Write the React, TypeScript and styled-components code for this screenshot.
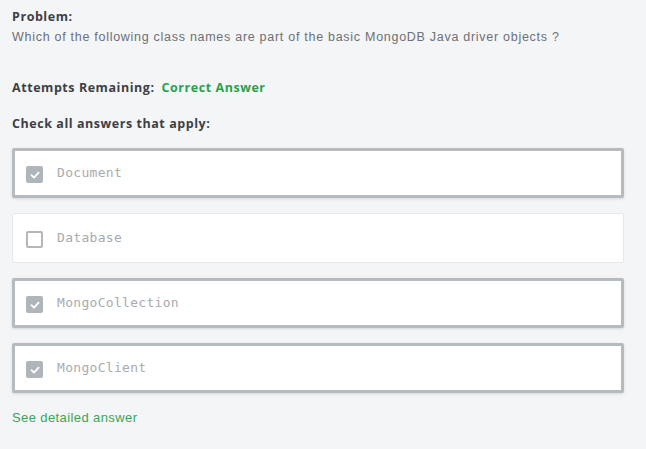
import styled, { createGlobalStyle } from "styled-components";

const GlobalStyle = createGlobalStyle`
  html, body {
    margin: 0;
    padding: 0;
    background: #f4f5f7;
  }
  body {
    font-family: "Liberation Sans", Arial, sans-serif;
  }
`;

type Answer = { id: string; label: string; checked: boolean };

const answers: Answer[] = [
  { id: "a1", label: "Document", checked: true },
  { id: "a2", label: "Database", checked: false },
  { id: "a3", label: "MongoCollection", checked: true },
  { id: "a4", label: "MongoClient", checked: true },
];

function CheckBox({ checked }: { checked: boolean }) {
  return (
    <Box $checked={checked}>
      {checked && (
        <svg width="12" height="12" viewBox="0 0 12 12">
          <path
            d="M2.5 6.2 L5 8.6 L9.6 3.6"
            fill="none"
            stroke="#fff"
            strokeWidth="1.8"
            strokeLinecap="round"
            strokeLinejoin="round"
          />
        </svg>
      )}
    </Box>
  );
}

export default function App() {
  return (
    <>
      <GlobalStyle />
      <Page>
        <Title>Problem:</Title>
        <Question>
          Which of the following class names are part of the basic MongoDB Java
          driver objects ?
        </Question>
        <Status>
          <Title>Attempts Remaining:</Title>
          <Correct>Correct Answer</Correct>
        </Status>
        <Title>Check all answers that apply:</Title>
        <List>
          {answers.map((a) => (
            <Option key={a.id} $checked={a.checked}>
              <CheckBox checked={a.checked} />
              <Label>{a.label}</Label>
            </Option>
          ))}
        </List>
        <Detail href="#">See detailed answer</Detail>
      </Page>
    </>
  );
}

const Page = styled.div`
  width: 612px;
  padding: 9px 12px 20px;
  display: flex;
  flex-direction: column;
`;
const Title = styled.div`
  font-family: "Open Sans", "Liberation Sans", sans-serif;
  font-weight: 700;
  font-size: 12.5px;
  letter-spacing: 0.55px;
  color: #3c3f44;
  line-height: 16px;
`;
const Question = styled.p`
  margin: 4px 0 0;
  font-size: 12.5px;
  letter-spacing: 0.72px;
  line-height: 16px;
  color: #6d7075;
`;
const Status = styled.div`
  display: flex;
  gap: 7px;
  margin: 35px 0 20px;
`;
const Correct = styled.span`
  font-family: "Open Sans", "Liberation Sans", sans-serif;
  font-weight: 700;
  font-size: 12.5px;
  letter-spacing: 0.55px;
  line-height: 16px;
  color: #2ba04d;
`;
const List = styled.div`
  display: flex;
  flex-direction: column;
  gap: 15px;
  margin-top: 16px;
`;
const Option = styled.div<{ $checked: boolean }>`
  box-sizing: border-box;
  height: 50px;
  display: flex;
  align-items: center;
  gap: 14px;
  padding-left: ${(p) => (p.$checked ? "11px" : "13px")};
  background: #fff;
  border: ${(p) => (p.$checked ? "3px solid #b6bbc0" : "1px solid #e6e8eb")};
  border-radius: 2px;
  box-shadow: ${(p) => (p.$checked ? "0 1px 3px rgba(0,0,0,0.12)" : "none")};
`;
const Box = styled.span<{ $checked: boolean }>`
  box-sizing: border-box;
  width: 17px;
  height: 17px;
  margin-top: 3px;
  border-radius: 2px;
  display: flex;
  align-items: center;
  justify-content: center;
  background: ${(p) => (p.$checked ? "#b0b5bb" : "#fff")};
  border: ${(p) => (p.$checked ? "none" : "2px solid #b3b6ba")};
`;
const Label = styled.span`
  font-family: "DejaVu Sans Mono", "Liberation Mono", monospace;
  font-size: 13px;
  letter-spacing: 0.3px;
  color: #a9abae;
  margin-top: -1px;
`;
const Detail = styled.a`
  margin-top: 17px;
  font-size: 13px;
  letter-spacing: 0.4px;
  color: #3fa35a;
  text-decoration: none;
`;
